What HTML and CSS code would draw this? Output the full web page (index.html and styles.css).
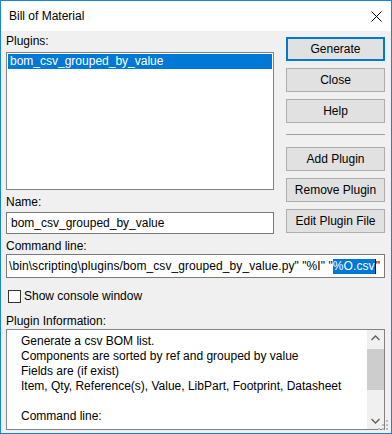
FILE: index.html
```html
<!DOCTYPE html>
<html>
<head>
<meta charset="utf-8">
<link rel="stylesheet" href="styles.css">
</head>
<body>
<div class="window">
  <div class="titlebar">
    <span class="title">Bill of Material</span>
    <svg class="close" width="11" height="11" viewBox="0 0 11 11"><path d="M0.5 0.5 L10.5 10.5 M10.5 0.5 L0.5 10.5" stroke="#000" stroke-width="1" fill="none"/></svg>
  </div>
  <div class="content">
    <div class="top">
      <div class="left">
        <div class="label first">Plugins:</div>
        <div class="listbox">
          <div class="item selected">bom_csv_grouped_by_value</div>
        </div>
        <div class="label name-label">Name:</div>
        <div class="textbox name">bom_csv_grouped_by_value</div>
      </div>
      <div class="buttons">
        <div class="btn default">Generate</div>
        <div class="btn">Close</div>
        <div class="btn">Help</div>
        <div class="separator"></div>
        <div class="btn">Add Plugin</div>
        <div class="btn">Remove Plugin</div>
        <div class="btn">Edit Plugin File</div>
      </div>
    </div>
    <div class="label cmd-label">Command line:</div>
    <div class="textbox cmd"><span class="cmdtext">\bin\scripting\plugins/bom_csv_grouped_by_value.py" "%I" "<span class="sel">%O.csv</span><span class="caret"></span>"</span></div>
    <div class="check"><span class="box"></span><span>Show console window</span></div>
    <div class="label info-label">Plugin Information:</div>
    <div class="textarea">
      <div class="text">
        <div>Generate a csv BOM list.</div>
        <div>Components are sorted by ref and grouped by value</div>
        <div>Fields are (if exist)</div>
        <div>Item, Qty, Reference(s), Value, LibPart, Footprint, Datasheet</div>
        <div>&nbsp;</div>
        <div>Command line:</div>
      </div>
      <div class="scrollbar">
        <div class="arrow"><svg width="17" height="17" viewBox="0 0 17 17"><path d="M4.5 10 L8.5 6 L12.5 10" stroke="#606060" stroke-width="1.4" fill="none"/></svg></div>
        <div class="track"><div class="thumb"></div></div>
        <div class="arrow"><svg width="17" height="17" viewBox="0 0 17 17"><path d="M4.5 7 L8.5 11 L12.5 7" stroke="#606060" stroke-width="1.4" fill="none"/></svg></div>
      </div>
    </div>
    <svg class="grip" width="12" height="12" viewBox="0 0 12 12">
      <rect x="9" y="1" width="2" height="2" fill="#bcbcbc"/>
      <rect x="5" y="5" width="2" height="2" fill="#bcbcbc"/>
      <rect x="9" y="5" width="2" height="2" fill="#bcbcbc"/>
      <rect x="1" y="9" width="2" height="2" fill="#bcbcbc"/>
      <rect x="5" y="9" width="2" height="2" fill="#bcbcbc"/>
      <rect x="9" y="9" width="2" height="2" fill="#bcbcbc"/>
    </svg>
  </div>
</div>
</body>
</html>
```

FILE: styles.css
```css
* { box-sizing: border-box; }
html, body { margin: 0; padding: 0; }
body {
  font-family: "Liberation Sans", Arial, sans-serif;
  font-size: 12px;
  line-height: 15px;
  color: #000;
  background: #fff;
}
.window {
  width: 392px;
  height: 434px;
  border: 1px solid #1883d7;
  background: #f0f0f0;
  display: flex;
  flex-direction: column;
  position: relative;
}
.titlebar {
  height: 30px;
  background: #fff;
  display: flex;
  align-items: center;
  padding-left: 8px;
  padding-right: 9px;
  justify-content: space-between;
}
.title { display: block; }
.close { display: block; }
.content {
  flex: 1;
  padding: 3px 6px 0 5px;
}
.top { display: flex; gap: 12px; }
.left { width: 268px; display: flex; flex-direction: column; }
.label { height: 15px; white-space: nowrap; }
.first { margin-bottom: 3px; }
.listbox {
  height: 138px;
  background: #fff;
  border: 1px solid #828282;
  padding: 1px;
}
.item { height: 15px; padding-left: 2px; white-space: nowrap; }
.item.selected { background: #0078d7; color: #fff; }
.name-label { margin-top: 5px; margin-bottom: 2px; }
.textbox {
  background: #fff;
  border: 1px solid #7a7a7a;
  display: flex;
  align-items: center;
  white-space: nowrap;
}
.name { height: 22px; padding-left: 4px; }
.buttons {
  width: 99px;
  margin-top: 3px;
  display: flex;
  flex-direction: column;
  gap: 7px;
}
.btn {
  height: 24px;
  background: #e1e1e1;
  border: 1px solid #adadad;
  display: flex;
  align-items: center;
  justify-content: center;
  white-space: nowrap;
}
.btn.default { border: 2px solid #0078d7; }
.separator {
  height: 1px;
  background: #a0a0a0;
  margin: 4px 0 5px 0;
}
.cmd-label { margin-top: 5px; }
.cmd {
  height: 24px;
  padding-left: 2px;
}
.cmdtext {
  white-space: nowrap;
  display: inline-flex;
  align-items: center;
  letter-spacing: 0.08px;
}
.sel { background: #0078d7; color: #fff; line-height: 15px; }
.caret { display: inline-block; width: 1px; height: 15px; background: #000; }
.check {
  margin-top: 11px;
  display: flex;
  align-items: center;
  height: 15px;
  padding-left: 2px;
  gap: 3px;
}
.box {
  width: 13px;
  height: 13px;
  border: 1px solid #333;
  background: #fff;
}
.info-label { margin-top: 10px; }
.textarea {
  height: 101px;
  background: #fff;
  border: 1px solid #828282;
  display: flex;
}
.text {
  flex: 1;
  padding: 4px 0 0 14px;
  white-space: nowrap;
  overflow: hidden;
}
.scrollbar {
  width: 17px;
  background: #f0f0f0;
  display: flex;
  flex-direction: column;
}
.arrow { height: 17px; }
.arrow svg { display: block; }
.track { flex: 1; padding-top: 2px; }
.thumb { height: 41px; background: #cdcdcd; }
.grip { position: absolute; right: 2px; bottom: 2px; }
```
